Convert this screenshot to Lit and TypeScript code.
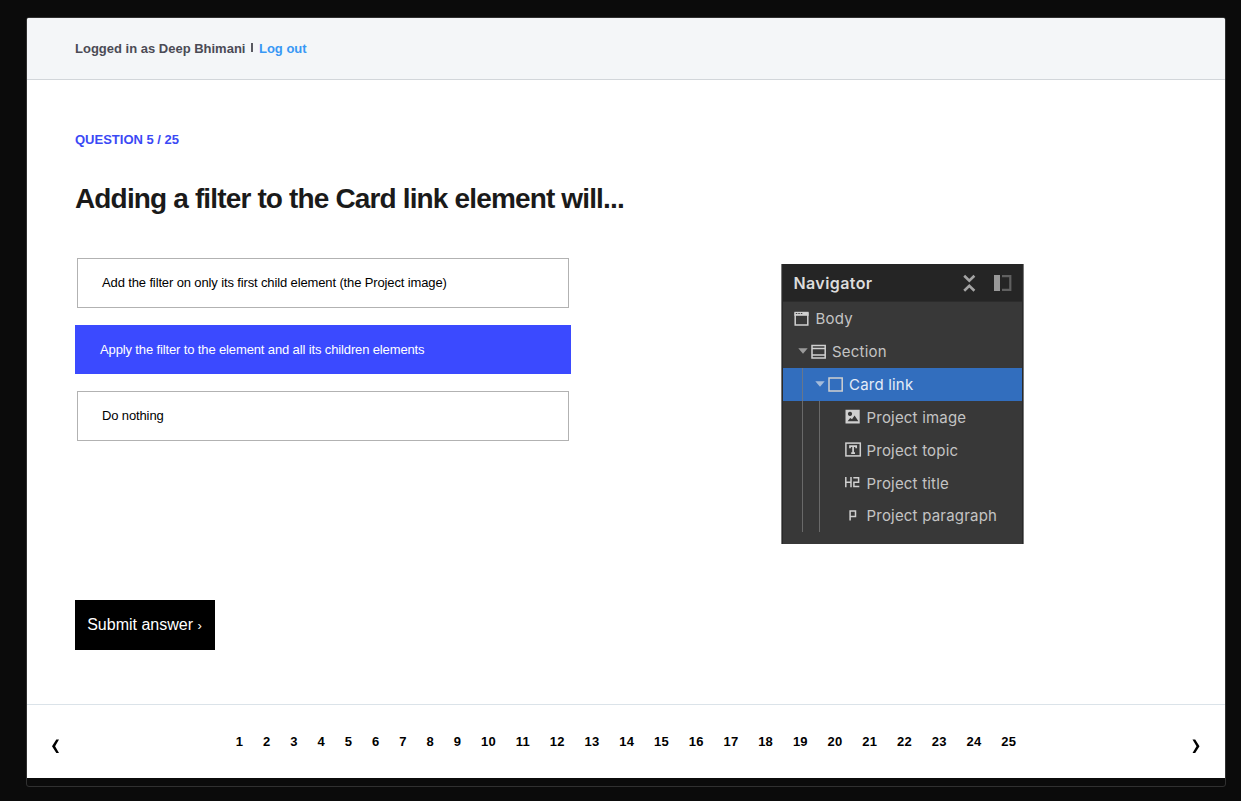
import { LitElement, html, css, svg } from "lit";
import { customElement, state } from "lit/decorators.js";
import { classMap } from "lit/directives/class-map.js";

const ICONS = {
  body: svg`<path d="M1.2 1.5v12.4h12.6V1.5" fill="none" stroke="currentColor" stroke-width="1.5"/><path d="M.4.8h14.2v4H.4z" fill="currentColor"/><path d="M1.8 2.5h1.5M4.3 2.5h1.5M6.8 2.5h1.5" stroke="#444" stroke-width="1.2"/>`,
  section: svg`<path d="M1 1.5h13.2v12.4H1zM1 4.4h13.2M1 11h13.2" fill="none" stroke="currentColor" stroke-width="1.5"/>`,
  link: svg`<rect x="1" y="1" width="13.2" height="13" fill="none" stroke="currentColor" stroke-width="1.5"/>`,
  image: svg`<path fill="currentColor" fill-rule="evenodd" d="M.5.8h14.2v13.6H.5zM2.6 12.3h10.8L9.6 6.6 7 10.2 5.2 9zM5 2.8a2.1 2.1 0 1 0 .01 0z"/>`,
  text: svg`<rect x=".9" y="1.1" width="14.4" height="12.8" fill="none" stroke="currentColor" stroke-width="1.5"/><path d="M5 6.2V4.2h6.2v2M8.1 4.2v6.9M6.2 11.1H10" fill="none" stroke="currentColor" stroke-width="1.7"/>`,
  h2: svg`<path d="M.8 2.1v10.2M6 2.1v10.2M.8 7.2H6M8.3 2.8h5.3v4.4H8.9v4.4h5.4" fill="none" stroke="currentColor" stroke-width="1.5"/>`,
  p: svg`<path d="M5.1 12.5V3.1h5.4v5.3H5.1" fill="none" stroke="currentColor" stroke-width="1.5"/>`,
};

interface TreeNode {
  label: string;
  icon: keyof typeof ICONS;
  depth: string;
  open?: boolean;
  selected?: boolean;
}

const TREE: TreeNode[] = [
  { label: "Body", icon: "body", depth: "d0" },
  { label: "Section", icon: "section", depth: "d1", open: true },
  { label: "Card link", icon: "link", depth: "d2", open: true, selected: true },
  { label: "Project image", icon: "image", depth: "d3" },
  { label: "Project topic", icon: "text", depth: "d3" },
  { label: "Project title", icon: "h2", depth: "d3" },
  { label: "Project paragraph", icon: "p", depth: "d3" },
];

@customElement("navigator-panel")
export class NavigatorPanel extends LitElement {
  static styles = css`
    :host { display: block; box-sizing: border-box; width: 243px; height: 280px; background: #383838;
      border-left: 1px solid #777; border-right: 1px solid #777; color: #c4c4c4;
      font-family: Inter, sans-serif; font-size: 15px; position: relative; }
    .panel { border: solid #292929; border-width: 0 1px; height: 280px; box-sizing: border-box; }
    .head { height: 38px; box-sizing: border-box; background: #252525; border-bottom: 1px solid #2c2c2c;
      display: flex; align-items: center; padding: 0 10px 0 10.5px; color: #dcdcdc; }
    .title { flex: 1; font-weight: 600; font-size: 16px; letter-spacing: 0.4px; }
    .collapse { margin-right: 18px; color: #a4a4a4; }
    .row { height: 32.85px; display: flex; align-items: center; letter-spacing: 0.2px; }
    .row svg { flex: none; }
    .d0 { padding-left: 11px; }
    .d1 { padding-left: 14.5px; }
    .d2 { padding-left: 31.5px; }
    .d3 { padding-left: 62px; }
    .arrow { margin-right: 3px; color: #9a9a9a; }
    .icon { margin-right: 6.5px; color: #d0d0d0; overflow: visible; }
    .label { padding-top: 1px; }
    .selected { background: #326ebe; color: #e4ecf7; }
    .selected .arrow { color: #a5bcdb; }
    .guide { position: absolute; width: 1px; background: #7a7a7a; bottom: 12px; opacity: .75; }
    .outer { left: 20px; top: 104px; }
    .inner { left: 37px; top: 137px; }
  `;

  render() {
    return html`<div class="panel">
      <div class="head">
        <span class="title">Navigator</span>
        <svg class="collapse" width="13" height="18" viewBox="0 0 13 18" fill="none" stroke="currentColor" stroke-width="2.6"><path d="M1.2 1.7l5.1 4.9 5.1-4.9M1.2 16.7l5.1-4.9 5.1 4.9"/></svg>
        <svg width="18" height="18" viewBox="0 0 18 18"><path d="M0 1h6v16H0z" fill="#999"/><path d="M8 2.2h8.3v13.6H8" fill="none" stroke="#606060" stroke-width="2.2"/></svg>
      </div>
      ${TREE.map((n) => html`<div class=${classMap({ row: true, [n.depth]: true, selected: !!n.selected })}>
        ${n.open ? html`<svg class="arrow" width="10" height="6" viewBox="0 0 10 6"><path d="M.3.3h9.4L5 5.8z" fill="currentColor"/></svg>` : ""}
        <svg class="icon" width="15" height="15" viewBox="0 0 15 15">${ICONS[n.icon]}</svg>
        <span class="label">${n.label}</span>
      </div>`)}
    </div>
    <div class="guide outer"></div><div class="guide inner"></div>`;
  }
}

@customElement("app-root")
export class AppRoot extends LitElement {
  @state() private selected = 1;

  private answers = [
    "Add the filter on only its first child element (the Project image)",
    "Apply the filter to the element and all its children elements",
    "Do nothing",
  ];

  static styles = css`
    :host { display: block; box-sizing: border-box; height: 801px; padding: 17px 15px 14px 26px; background: #0b0b0b;
      font-family: "Liberation Sans", Arial, sans-serif; font-size: 13px; }
    .window { box-sizing: border-box; height: 770px; border: 1px solid #303030; border-radius: 3px; overflow: hidden; }
    .page { height: 760px; background: #fff; display: flex; flex-direction: column; }
    .top { box-sizing: border-box; height: 62px; background: #f4f6f8; border-bottom: 1px solid #d2d6da;
      display: flex; align-items: center; padding-left: 48px; font-weight: 700; color: #4b4b55; }
    .sep { width: 2px; height: 9px; background: #5a5a62; margin: 0 6px 3px 5.5px; }
    .logout { color: #3898f5; }
    .main { flex: 1; padding: 52px 48px 0; }
    .count { color: #3b49f5; font-weight: 700; line-height: 16px; }
    h1 { margin: 33px 0 0; font-size: 28px; line-height: 36px; letter-spacing: -0.85px; color: #1a1a1a; }
    .columns { display: flex; }
    .answers { width: 496px; padding-top: 41px; display: flex; flex-direction: column; gap: 17px; }
    .answer { box-sizing: border-box; height: 50px; margin: 0 2px; border: 1px solid #b2b2b2; padding: 0 24px 1px;
      display: flex; align-items: center; color: #000; letter-spacing: -0.13px; }
    .chosen { margin: 0; height: 49px; border-color: #3b4aff; background: #3b4aff; color: #fff; padding-bottom: 0; }
    .figure { margin: 47px 0 0 210px; }
    .submit { margin-top: 56px; width: 140px; height: 50px; background: #000; color: #fff; font: inherit; font-size: 16px;
      border: 0; padding: 0 1px 1px 0; display: block; }
    .tip { font-size: 13px; }
    .pager { box-sizing: border-box; height: 74px; border-top: 1px solid #dbe3e9; display: flex;
      justify-content: space-between; padding: 0 24px; }
    .numbers { display: flex; gap: 19.77px; padding-top: 29px; font-size: 13px; letter-spacing: 0.25px; line-height: 16px; font-weight: 700; color: #000; }
    .chev { margin-top: 34px; }
  `;

  render() {
    return html`<div class="window"><div class="page">
      <div class="top"><span>Logged in as Deep Bhimani</span><i class="sep"></i><span class="logout">Log out</span></div>
      <div class="main">
        <div class="count">QUESTION 5 / 25</div>
        <h1>Adding a filter to the Card link element will...</h1>
        <div class="columns">
          <div class="answers">
            ${this.answers.map((a, i) => html`<div class=${classMap({ answer: true, chosen: i === this.selected })} @click=${() => (this.selected = i)}>${a}</div>`)}
          </div>
          <navigator-panel class="figure"></navigator-panel>
        </div>
        <button class="submit">Submit answer <span class="tip">›</span></button>
      </div>
      <div class="pager">
        <svg class="chev" width="9" height="15" viewBox="0 0 9 15"><path d="M5.3.5h2.7L4.1 7.3 8 14H5.3L1 7.3z"/></svg>
        <div class="numbers">${Array.from({ length: 25 }, (_, i) => html`<span>${i + 1}</span>`)}</div>
        <svg class="chev" width="9" height="15" viewBox="0 0 9 15"><path d="M3.2.5H.5l4 6.8-4 6.7h2.7l4.3-6.7z"/></svg>
      </div>
    </div></div>`;
  }
}
